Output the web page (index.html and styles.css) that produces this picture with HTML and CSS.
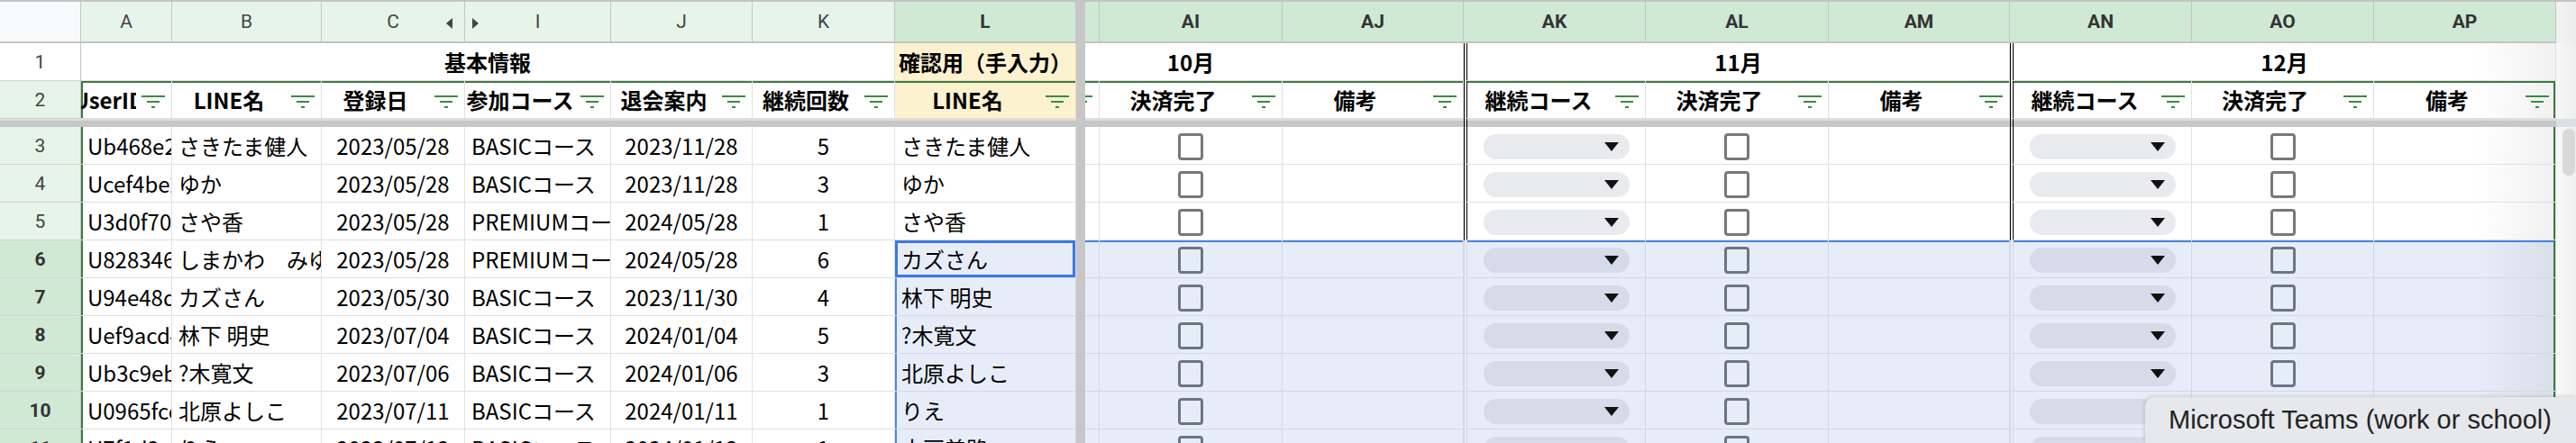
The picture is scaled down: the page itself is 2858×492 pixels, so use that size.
FILE: index.html
```html
<!DOCTYPE html>
<html lang="ja">
<head>
<meta charset="utf-8">
<title>Sheet</title>
<link rel="stylesheet" href="styles.css">
</head>
<body>
<div class="sheet">
  <div class="vdiv"></div>
  <div class="scroll"><div class="sc-h"></div><div class="sc-f"></div><div class="sc-d"></div><div class="sc-t"><div class="thumb"></div></div></div>

  <!-- column letters -->
  <div class="ch cn"></div>
  <div class="ch">A</div>
  <div class="ch">B</div>
  <div class="ch chc"><span></span><span>C</span><span class="ar al"></span></div>
  <div class="ch chi"><span class="ar arr"></span><span>I</span><span></span></div>
  <div class="ch">J</div>
  <div class="ch">K</div>
  <div class="ch s">L</div>
  <div class="ch s"></div>
  <div class="ch s">AI</div>
  <div class="ch s">AJ</div>
  <div class="ch s">AK</div>
  <div class="ch s">AL</div>
  <div class="ch s">AM</div>
  <div class="ch s">AN</div>
  <div class="ch s">AO</div>
  <div class="ch s">AP</div>

  <!-- row 1 -->
  <div class="rh w">1</div>
  <div class="c ctr b sp6">基本情報</div>
  <div class="c ctr b yel np">確認用（手入力）</div>
  <div class="c nr"></div>
  <div class="c ctr b nr">10月</div>
  <div class="c"></div>
  <div class="c ctr b sp3 dbl">11月</div>
  <div class="c ctr b sp3 dbl fade">12月</div>

  <!-- row 2 -->
  <div class="rh">2</div>
  <div class="c hd gt gl"><span class="lbl">UserID</span><svg class="fi" viewBox="0 0 26 14"><path d="M0 0h26v2H0zM6 6h14v2H6zM11 12h4v2h-4z"/></svg></div>
  <div class="c hd gt"><span class="lbl">LINE名</span><svg class="fi" viewBox="0 0 26 14"><path d="M0 0h26v2H0zM6 6h14v2H6zM11 12h4v2h-4z"/></svg></div>
  <div class="c hd gt"><span class="lbl">登録日</span><svg class="fi" viewBox="0 0 26 14"><path d="M0 0h26v2H0zM6 6h14v2H6zM11 12h4v2h-4z"/></svg></div>
  <div class="c hd gt"><span class="lbl">参加コース</span><svg class="fi" viewBox="0 0 26 14"><path d="M0 0h26v2H0zM6 6h14v2H6zM11 12h4v2h-4z"/></svg></div>
  <div class="c hd gt"><span class="lbl">退会案内</span><svg class="fi" viewBox="0 0 26 14"><path d="M0 0h26v2H0zM6 6h14v2H6zM11 12h4v2h-4z"/></svg></div>
  <div class="c hd gt"><span class="lbl">継続回数</span><svg class="fi" viewBox="0 0 26 14"><path d="M0 0h26v2H0zM6 6h14v2H6zM11 12h4v2h-4z"/></svg></div>
  <div class="c hd gt yel"><span class="lbl">LINE名</span><svg class="fi" viewBox="0 0 26 14"><path d="M0 0h26v2H0zM6 6h14v2H6zM11 12h4v2h-4z"/></svg></div>
  <div class="c hd gt pt"><svg class="fi" viewBox="0 0 26 14"><path d="M0 0h26v2H0zM6 6h14v2H6zM11 12h4v2h-4z"/></svg></div>
  <div class="c hd gt"><span class="lbl">決済完了</span><svg class="fi" viewBox="0 0 26 14"><path d="M0 0h26v2H0zM6 6h14v2H6zM11 12h4v2h-4z"/></svg></div>
  <div class="c hd gt"><span class="lbl">備考</span><svg class="fi" viewBox="0 0 26 14"><path d="M0 0h26v2H0zM6 6h14v2H6zM11 12h4v2h-4z"/></svg></div>
  <div class="c hd gt dbl"><span class="lbl">継続コース</span><svg class="fi" viewBox="0 0 26 14"><path d="M0 0h26v2H0zM6 6h14v2H6zM11 12h4v2h-4z"/></svg></div>
  <div class="c hd gt"><span class="lbl">決済完了</span><svg class="fi" viewBox="0 0 26 14"><path d="M0 0h26v2H0zM6 6h14v2H6zM11 12h4v2h-4z"/></svg></div>
  <div class="c hd gt"><span class="lbl">備考</span><svg class="fi" viewBox="0 0 26 14"><path d="M0 0h26v2H0zM6 6h14v2H6zM11 12h4v2h-4z"/></svg></div>
  <div class="c hd gt dbl"><span class="lbl">継続コース</span><svg class="fi" viewBox="0 0 26 14"><path d="M0 0h26v2H0zM6 6h14v2H6zM11 12h4v2h-4z"/></svg></div>
  <div class="c hd gt"><span class="lbl">決済完了</span><svg class="fi" viewBox="0 0 26 14"><path d="M0 0h26v2H0zM6 6h14v2H6zM11 12h4v2h-4z"/></svg></div>
  <div class="c hd gt gr fade"><span class="lbl">備考</span><svg class="fi" viewBox="0 0 26 14"><path d="M0 0h26v2H0zM6 6h14v2H6zM11 12h4v2h-4z"/></svg></div>

  <!-- frozen divider -->
  <div class="dv sp8"></div>
  <div class="dv sp3"></div>
  <div class="dv sp3 dbl"></div>
  <div class="dv sp3 dbl"></div>

  <!-- row 3 -->
  <div class="rh">3</div>
  <div class="c gl">Ub468e21a7c93f0d2e5b4c8a1f6d3e90b</div>
  <div class="c">さきたま健人</div>
  <div class="c ctr">2023/05/28</div>
  <div class="c">BASICコース</div>
  <div class="c ctr">2023/11/28</div>
  <div class="c ctr">5</div>
  <div class="c">さきたま健人</div>
  <div class="c"></div>
  <div class="c ctr"><span class="cb"></span></div>
  <div class="c"></div>
  <div class="c dbl ddc"><span class="dd"><i class="tri"></i></span></div>
  <div class="c ctr"><span class="cb"></span></div>
  <div class="c"></div>
  <div class="c dbl ddc"><span class="dd"><i class="tri"></i></span></div>
  <div class="c ctr"><span class="cb"></span></div>
  <div class="c gr fade"></div>

  <!-- row 4 -->
  <div class="rh">4</div>
  <div class="c gl">Ucef4be2937d1a0c5b8e6f24a19c7d03e</div>
  <div class="c">ゆか</div>
  <div class="c ctr">2023/05/28</div>
  <div class="c">BASICコース</div>
  <div class="c ctr">2023/11/28</div>
  <div class="c ctr">3</div>
  <div class="c">ゆか</div>
  <div class="c"></div>
  <div class="c ctr"><span class="cb"></span></div>
  <div class="c"></div>
  <div class="c dbl ddc"><span class="dd"><i class="tri"></i></span></div>
  <div class="c ctr"><span class="cb"></span></div>
  <div class="c"></div>
  <div class="c dbl ddc"><span class="dd"><i class="tri"></i></span></div>
  <div class="c ctr"><span class="cb"></span></div>
  <div class="c gr fade"></div>

  <!-- row 5 -->
  <div class="rh">5</div>
  <div class="c gl">U3d0f70c4e81b92a6f0c3d57e2a14b8f9</div>
  <div class="c">さや香</div>
  <div class="c ctr">2023/05/28</div>
  <div class="c">PREMIUMコース</div>
  <div class="c ctr">2024/05/28</div>
  <div class="c ctr">1</div>
  <div class="c">さや香</div>
  <div class="c"></div>
  <div class="c ctr"><span class="cb"></span></div>
  <div class="c"></div>
  <div class="c dbl ddc"><span class="dd"><i class="tri"></i></span></div>
  <div class="c ctr"><span class="cb"></span></div>
  <div class="c"></div>
  <div class="c dbl ddc"><span class="dd"><i class="tri"></i></span></div>
  <div class="c ctr"><span class="cb"></span></div>
  <div class="c gr fade"></div>

  <!-- row 6 -->
  <div class="rh s">6</div>
  <div class="c gl">U828346c0b5e7a19d3f2c84e6a07b1d5c</div>
  <div class="c">しまかわ　みゆき</div>
  <div class="c ctr">2023/05/28</div>
  <div class="c">PREMIUMコース</div>
  <div class="c ctr">2024/05/28</div>
  <div class="c ctr">6</div>
  <div class="c sel act">カズさん</div>
  <div class="c sel st"></div>
  <div class="c ctr sel st"><span class="cb"></span></div>
  <div class="c sel st"></div>
  <div class="c dbl ddc sel st"><span class="dd"><i class="tri"></i></span></div>
  <div class="c ctr sel st"><span class="cb"></span></div>
  <div class="c sel st"></div>
  <div class="c dbl ddc sel st"><span class="dd"><i class="tri"></i></span></div>
  <div class="c ctr sel st"><span class="cb"></span></div>
  <div class="c gr fade sel st"></div>

  <!-- row 7 -->
  <div class="rh s">7</div>
  <div class="c gl">U94e48da27c6f0b13e9d5a48c2f71e06b</div>
  <div class="c">カズさん</div>
  <div class="c ctr">2023/05/30</div>
  <div class="c">BASICコース</div>
  <div class="c ctr">2023/11/30</div>
  <div class="c ctr">4</div>
  <div class="c sel sl">林下 明史</div>
  <div class="c sel"></div>
  <div class="c ctr sel"><span class="cb"></span></div>
  <div class="c sel"></div>
  <div class="c dbl ddc sel"><span class="dd"><i class="tri"></i></span></div>
  <div class="c ctr sel"><span class="cb"></span></div>
  <div class="c sel"></div>
  <div class="c dbl ddc sel"><span class="dd"><i class="tri"></i></span></div>
  <div class="c ctr sel"><span class="cb"></span></div>
  <div class="c gr fade sel"></div>

  <!-- row 8 -->
  <div class="rh s">8</div>
  <div class="c gl">Uef9acd4b1e6073c2d58f9a0e4b7c13d6</div>
  <div class="c">林下 明史</div>
  <div class="c ctr">2023/07/04</div>
  <div class="c">BASICコース</div>
  <div class="c ctr">2024/01/04</div>
  <div class="c ctr">5</div>
  <div class="c sel sl">?木寛文</div>
  <div class="c sel"></div>
  <div class="c ctr sel"><span class="cb"></span></div>
  <div class="c sel"></div>
  <div class="c dbl ddc sel"><span class="dd"><i class="tri"></i></span></div>
  <div class="c ctr sel"><span class="cb"></span></div>
  <div class="c sel"></div>
  <div class="c dbl ddc sel"><span class="dd"><i class="tri"></i></span></div>
  <div class="c ctr sel"><span class="cb"></span></div>
  <div class="c gr fade sel"></div>

  <!-- row 9 -->
  <div class="rh s">9</div>
  <div class="c gl">Ub3c9ebl7f20d4a8c6e1b95f3a0d27c48</div>
  <div class="c">?木寛文</div>
  <div class="c ctr">2023/07/06</div>
  <div class="c">BASICコース</div>
  <div class="c ctr">2024/01/06</div>
  <div class="c ctr">3</div>
  <div class="c sel sl">北原よしこ</div>
  <div class="c sel"></div>
  <div class="c ctr sel"><span class="cb"></span></div>
  <div class="c sel"></div>
  <div class="c dbl ddc sel"><span class="dd"><i class="tri"></i></span></div>
  <div class="c ctr sel"><span class="cb"></span></div>
  <div class="c sel"></div>
  <div class="c dbl ddc sel"><span class="dd"><i class="tri"></i></span></div>
  <div class="c ctr sel"><span class="cb"></span></div>
  <div class="c gr fade sel"></div>

  <!-- row 10 -->
  <div class="rh s">10</div>
  <div class="c gl">U0965fcc3a8d1e7b40f5c92e6d1a83b7f</div>
  <div class="c">北原よしこ</div>
  <div class="c ctr">2023/07/11</div>
  <div class="c">BASICコース</div>
  <div class="c ctr">2024/01/11</div>
  <div class="c ctr">1</div>
  <div class="c sel sl">りえ</div>
  <div class="c sel"></div>
  <div class="c ctr sel"><span class="cb"></span></div>
  <div class="c sel"></div>
  <div class="c dbl ddc sel"><span class="dd"><i class="tri"></i></span></div>
  <div class="c ctr sel"><span class="cb"></span></div>
  <div class="c sel"></div>
  <div class="c dbl ddc sel"><span class="dd"><i class="tri"></i></span></div>
  <div class="c ctr sel"><span class="cb"></span></div>
  <div class="c gr fade sel"></div>

  <!-- row 11 -->
  <div class="rh s">11</div>
  <div class="c gl">U7f1d2ac9e40b5836d1f7ca2e9b04d5a1</div>
  <div class="c">りえ</div>
  <div class="c ctr">2023/07/13</div>
  <div class="c">BASICコース</div>
  <div class="c ctr">2024/01/13</div>
  <div class="c ctr">1</div>
  <div class="c sel sl">大戸美路</div>
  <div class="c sel"></div>
  <div class="c ctr sel"><span class="cb"></span></div>
  <div class="c sel"></div>
  <div class="c dbl ddc sel"><span class="dd"><i class="tri"></i></span></div>
  <div class="c ctr sel"><span class="cb"></span></div>
  <div class="c sel"></div>
  <div class="c dbl ddc sel"><span class="dd"><i class="tri"></i></span></div>
  <div class="c ctr sel"><span class="cb"></span></div>
  <div class="c gr fade sel"></div>
</div>

<div class="tip">Microsoft Teams (work or school)</div>
</body>
</html>
```

FILE: styles.css
```css
html, body {
  margin: 0;
  padding: 0;
}
body {
  width: 2858px;
  height: 492px;
  overflow: hidden;
  position: relative;
  background: #fff;
  font-family: "Noto Sans CJK JP", "Noto Sans", sans-serif;
}

.sheet {
  display: grid;
  grid-template-columns: 90px 101px 166px 159px 162px 157px 158px 201px 10px 16px 203px 201px 202px 203px 201px 202px 202px 202px 22px;
  grid-template-rows: 46px 42px 42px 9px repeat(9, 42px);
  border-top: 2px solid #c4c4c4;
}
.sheet > div {
  box-sizing: border-box;
  min-width: 0;
}

.vdiv {
  grid-column: 9;
  grid-row: 1 / -1;
  background: #c7c7c7;
  z-index: 3;
}

.scroll {
  grid-column: 19;
  grid-row: 1 / -1;
  display: flex;
  flex-direction: column;
}
.sc-h { height: 46px; background: linear-gradient(90deg, #f3f3f3, #ececec); }
.sc-f { height: 84px; background: linear-gradient(90deg, #f7f7f7, #efefef); }
.sc-d { height: 9px; background: #dcdfe3; }
.sc-t {
  flex: 1;
  background: linear-gradient(90deg, #f8f8f8, #f0f0f0);
  padding: 2px 1px 0 7px;
}
.thumb {
  width: 14px;
  height: 52px;
  border-radius: 7px;
  background: #d8d8d8;
}

/* column letters */
.ch {
  display: flex;
  align-items: center;
  justify-content: center;
  background: #e7f4ea;
  border-right: 1px solid #c4c4c4;
  border-bottom: 2px solid #c4c4c4;
  font: 21px Roboto, "Liberation Sans", sans-serif;
  color: #444;
}
.ch.s {
  background: #cfe9d5;
  font-weight: 700;
  color: #333;
}
.ch.cn { background: #f8f9fa; }
.chc, .chi {
  display: grid;
  grid-template-columns: 1fr auto 1fr;
  align-items: center;
}
.ar {
  display: block;
  width: 0;
  height: 0;
  border-top: 6px solid transparent;
  border-bottom: 6px solid transparent;
  margin-top: 3px;
}
.al {
  border-right: 7px solid #444;
  justify-self: end;
  margin-right: 13px;
}
.arr {
  border-left: 7px solid #444;
  justify-self: start;
  margin-left: 8px;
}

/* row numbers */
.rh {
  display: flex;
  align-items: center;
  justify-content: center;
  background: #e7f4ea;
  border-right: 1px solid #c4c4c4;
  border-bottom: 1px solid #d4d4d4;
  font: 21px Roboto, "Liberation Sans", sans-serif;
  color: #444;
}
.rh.w { background: #fff; }
.rh.s {
  background: #cfe9d5;
  font-weight: 700;
  color: #333;
}

/* cells */
.c {
  display: flex;
  align-items: center;
  padding: 0 7px;
  border-right: 1px solid #e1e1e1;
  border-bottom: 1px solid #e1e1e1;
  font-size: 24px;
  line-height: 34px;
  white-space: nowrap;
  overflow: hidden;
  color: #000;
}
.ctr { justify-content: center; }
.b { font-weight: 700; }
.np { padding: 0; }
.nr { border-right-color: transparent; }
.sp3 { grid-column: span 3; }
.sp6 { grid-column: span 6; }
.sp8 { grid-column: span 8; }
.yel {
  background-color: #fdf2d0;
  border-color: #ecdfb6;
}
.dbl { border-left: 4px double #000; }

.hd {
  font-weight: 700;
  padding: 0 7px 0 0;
}
.lbl {
  flex: 1 1 0;
  min-width: 0;
  display: flex;
  justify-content: center;
  overflow: hidden;
}
.fi {
  flex: none;
  width: 26px;
  height: 14px;
  margin-left: 6px;
  margin-top: 4px;
  fill: #3a8a40;
}
.pt { justify-content: flex-end; }

.dv {
  background: linear-gradient(#dcdcdc 0 2px, #c7c7c7 2px);
}

/* filter range border */
.gt { box-shadow: inset 0 2px #3b7a3f; }
.gl { box-shadow: inset 2px 0 #3b7a3f; }
.gt.gl { box-shadow: inset 2px 0 #3b7a3f, inset 0 2px #3b7a3f; }
.gr { box-shadow: inset -2px 0 #3b7a3f; }
.gt.gr { box-shadow: inset -2px 0 #3b7a3f, inset 0 2px #3b7a3f; }

/* selection */
.sel {
  background-color: #e7edf8;
  border-color: #d3d8e1;
}
.st { box-shadow: inset 0 2px #4a84e6; }
.gr.st { box-shadow: inset -2px 0 #3b7a3f, inset 0 2px #4a84e6; }
.sl { box-shadow: inset 2px 0 #4a84e6; }
.act { box-shadow: inset 0 0 0 3px #3b78e7; }

.fade {
  background-image: linear-gradient(90deg, rgba(0, 0, 0, 0), rgba(0, 0, 0, 0.06));
  background-repeat: no-repeat;
  background-position: right top;
  background-size: 90px 100%;
}

/* checkbox */
.cb {
  display: block;
  width: 28px;
  height: 30px;
  box-sizing: border-box;
  border: 3px solid #787878;
  border-radius: 4px;
  margin-top: 3px;
}
.sel .cb { border-color: #6e7582; }

/* dropdown chip */
.ddc { padding: 0; }
.dd {
  flex: none;
  display: flex;
  align-items: center;
  justify-content: flex-end;
  width: 162px;
  height: 28px;
  margin: 3px 0 0 18px;
  border-radius: 14px;
  background: #e8eaed;
}
.sel .dd { background: #d5dbe9; }
.tri {
  display: block;
  width: 0;
  height: 0;
  border-left: 8px solid transparent;
  border-right: 8px solid transparent;
  border-top: 10px solid #111;
  margin-right: 12px;
}

/* tooltip */
.tip {
  position: absolute;
  left: 2380px;
  top: 441px;
  right: 0;
  bottom: 0;
  z-index: 10;
  display: flex;
  align-items: center;
  padding-left: 26px;
  background: #e6e8ec;
  border-top-left-radius: 10px;
  box-shadow: -1px -1px 4px rgba(0, 0, 0, 0.14);
  font: 29px "Liberation Sans", Arial, sans-serif;
  color: #222;
  white-space: nowrap;
}
```
